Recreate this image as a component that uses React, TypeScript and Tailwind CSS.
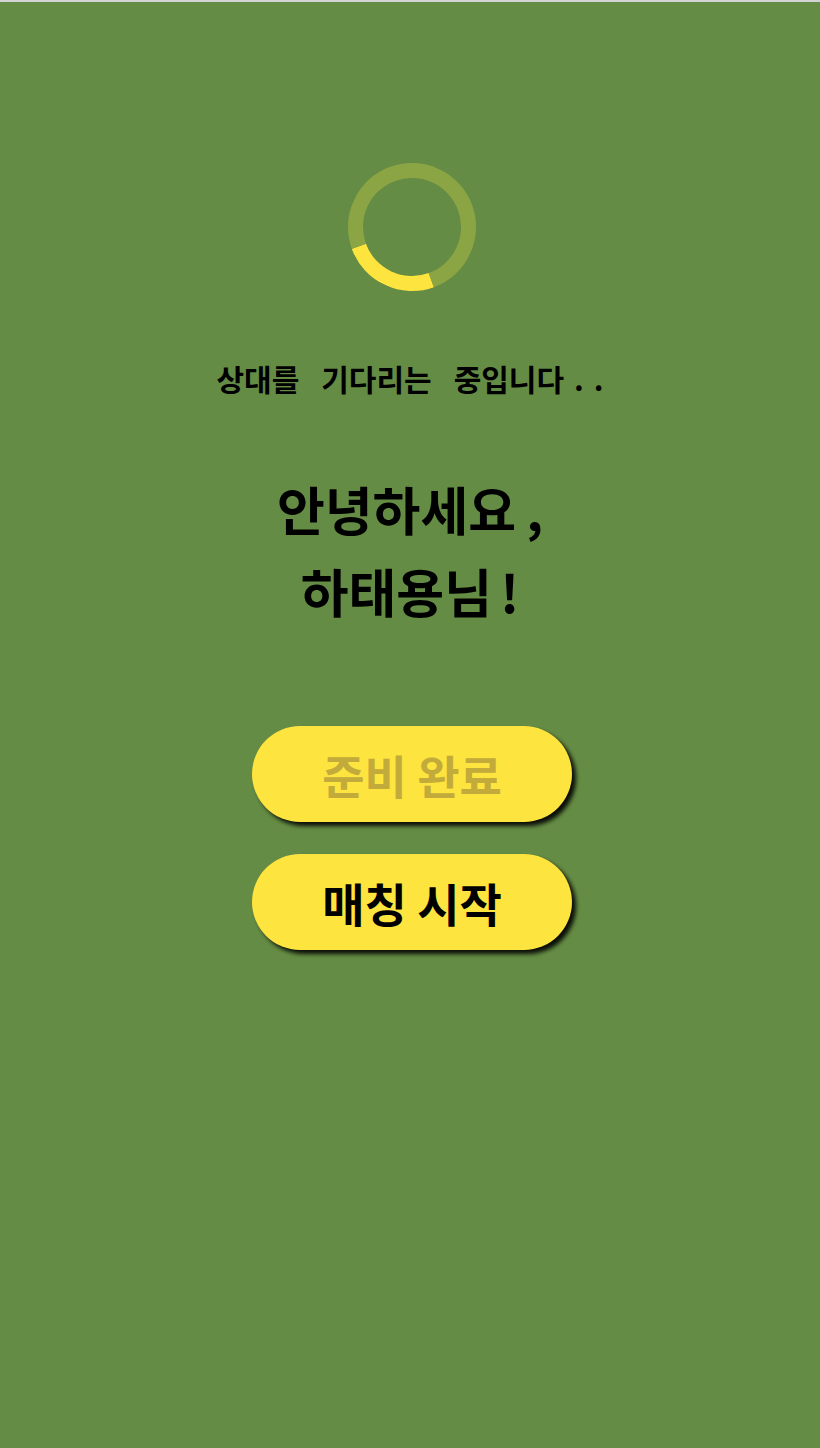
import React from 'react';

const font = { fontFamily: '"Noto Sans CJK KR", "Noto Sans", sans-serif' };

const Spinner: React.FC = () => (
  <div className="w-[128px] h-[128px] rounded-full border-[15px] border-[#8ba544] border-b-[#fde43f] rotate-[25deg]" />
);

const App: React.FC = () => {
  return (
    <div
      className="w-[820px] h-[1448px] bg-[#658c44] border-t-2 border-[#d4d4d4] flex flex-col items-center"
      style={font}
    >
      {/* loading ring */}
      <div className="mt-[161px] ml-[4px]">
        <Spinner />
      </div>

      <p className="mt-[72px] text-[30px] font-bold text-black leading-[30px] whitespace-nowrap">
        <span>상대를</span>
        <span className="ml-[22px]">기다리는</span>
        <span className="ml-[22px]">중입니다</span>
        <span className="ml-[10px]">.</span>
        <span className="ml-[10px]">.</span>
      </p>

      <h1 className="mt-[75px] text-[52px] font-bold text-black text-center leading-[82px]">
        <span>안녕하세요</span>
        <span className="ml-[10px]">,</span>
        <br />
        <span>하태용님</span>
        <span className="ml-[8px]">!</span>
      </h1>

      <div className="mt-[94px] ml-[4px] flex flex-col gap-8">
        <button className="w-[320px] h-[96px] rounded-full bg-[#fde43f] shadow-[4px_4px_4px_rgba(0,0,0,0.9)] text-[46px] font-bold text-[#c2ab3a]">
          준비 완료
        </button>
        <button className="w-[320px] h-[96px] rounded-full bg-[#fde43f] shadow-[4px_4px_4px_rgba(0,0,0,0.9)] text-[46px] font-bold text-black">
          매칭 시작
        </button>
      </div>
    </div>
  );
};

export default App;
